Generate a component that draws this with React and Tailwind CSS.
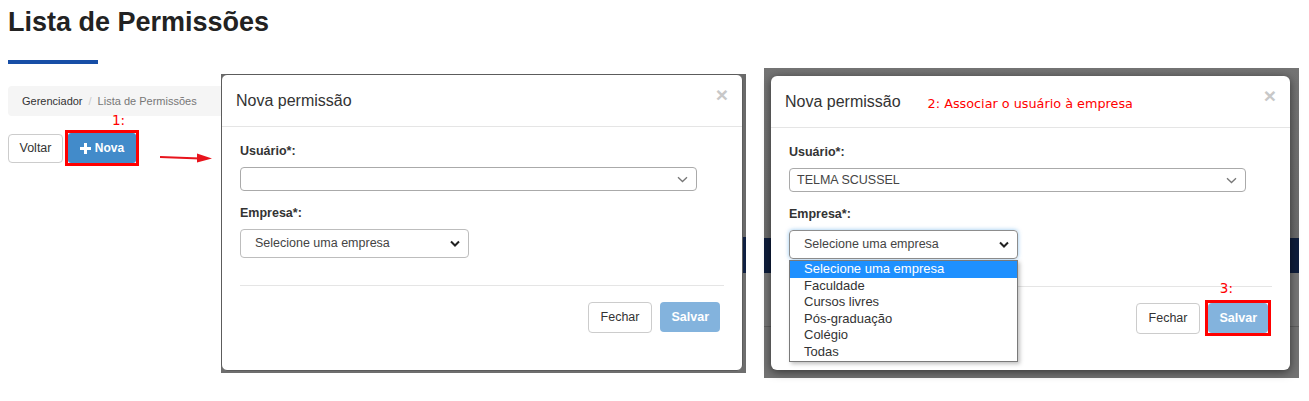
import React from 'react';

// select2-style thin arrow
function ThinChevron() {
  return (
    <svg width="11" height="7" viewBox="0 0 11 7" className="shrink-0">
      <path d="M1 1.2l4.5 4.3 4.5-4.3" fill="none" stroke="#777" strokeWidth="1.3" />
    </svg>
  );
}

// native select arrow
function BoldChevron() {
  return (
    <svg width="10" height="7" viewBox="0 0 10 7" className="shrink-0">
      <path d="M1 1.5l4 4 4-4" fill="none" stroke="#222" strokeWidth="2" />
    </svg>
  );
}

function PlusIcon() {
  return (
    <svg width="11" height="11" viewBox="0 0 11 11" className="shrink-0">
      <path d="M4 0h3v4h4v3H7v4H4V7H0V4h4z" fill="#fff" />
    </svg>
  );
}

const OPTIONS = ['Selecione uma empresa', 'Faculdade', 'Cursos livres', 'Pós-graduação', 'Colégio', 'Todas'];

function Modal({ step }) {
  const two = step === 2;
  return (
    <div
      className={`flex flex-col bg-white rounded-[6px] ${
        two ? 'w-[519px] h-[294px] shadow-[0_2px_10px_rgba(0,0,0,0.55)]' : 'w-[522px] h-[297px] border border-[#5c5c5c]'
      }`}
    >
      <div className="h-[51px] shrink-0 border-b border-[#e5e5e5] pl-[14px] pr-[14px] flex items-center box-content">
        <span className="text-[16px] text-[#333]">Nova permissão</span>
        {two && (
          <span className="ml-[27px] mt-[5px] text-[12.8px] text-[#f00] font-['DejaVu_Sans',sans-serif]">
            2: Associar o usuário à empresa
          </span>
        )}
        <span className="ml-auto self-start mt-[10px] h-[20px] leading-[20px] text-[21px] font-bold text-[#c8c8c8]">×</span>
      </div>

      <div className="px-[18px] pt-[15px] flex flex-col">
        <div className="text-[12.5px] leading-[18px] font-bold text-[#333]">Usuário*:</div>
        <div className="mt-[7px] w-[457px] h-[24px] border border-[#aaa] rounded-[4px] flex items-center justify-between pl-[7px] pr-[8px]">
          <span className="text-[12.5px] text-[#444]">{two ? 'TELMA SCUSSEL' : ''}</span>
          <ThinChevron />
        </div>

        <div className="mt-[13px] text-[12.5px] leading-[18px] font-bold text-[#333]">Empresa*:</div>
        <div className="relative mt-[7px] w-[229px]">
          <div
            className={`h-[29px] rounded-[4px] border flex items-center justify-between pl-[14px] pr-[8px] ${
              two ? 'border-[#8d8d8d] shadow-[0_0_4px_rgba(102,175,233,0.7)]' : 'border-[#bdbdbd]'
            }`}
          >
            <span className="text-[12.5px] text-[#444]">Selecione uma empresa</span>
            <BoldChevron />
          </div>
          {two && (
            <div className="absolute left-0 top-[30px] w-[229px] bg-white border border-[#7a7a7a] shadow-[2px_2px_4px_rgba(0,0,0,0.25)] z-10">
              {OPTIONS.map((o, i) => (
                <div
                  key={o}
                  className={`pl-[14px] text-[13px] leading-[16.6px] ${i === 0 ? 'bg-[#1e90ff] text-white' : 'text-[#333]'}`}
                >
                  {o}
                </div>
              ))}
            </div>
          )}
        </div>

        <div className="mt-[27px] h-px bg-[#e5e5e5]" />

        <div className="relative mt-[16px] pr-[4px] flex justify-end gap-[8px]">
          {two && (
            <span className="absolute right-[39px] -top-[22px] text-[13.5px] leading-[14px] text-[#f00] font-['DejaVu_Sans',sans-serif]">
              3:
            </span>
          )}
          <div className="h-[31px] px-[12px] flex items-center border border-[#ccc] rounded-[4px] text-[12.5px] text-[#333]">
            Fechar
          </div>
          <div className="relative h-[30px] px-[11px] flex items-center rounded-[4px] bg-[#83b3dd] text-[12.5px] font-bold text-white">
            Salvar
            {two && <div className="absolute -inset-[3px] border-[3px] border-[#f00]" />}
          </div>
        </div>
      </div>
    </div>
  );
}

export default function App() {
  return (
    <div className="w-[1309px] h-[401px] bg-white overflow-hidden font-['Liberation_Sans',Arial,sans-serif] text-[#333]">
      <h1 className="ml-[8px] mt-[6px] text-[27px] leading-[32px] font-bold text-[#222]">Lista de Permissões</h1>
      <div className="ml-[8px] mt-[22px] w-[90px] h-[4px] bg-[#174ea6]" />

      <div className="flex items-start">
        {/* page column */}
        <div className="relative ml-[8px] w-[213px] mt-[22px]">
          <div className="h-[30px] bg-[#f5f5f5] rounded-l-[4px] pl-[14px] flex items-center text-[11px]">
            <span className="text-[#333]">Gerenciador</span>
            <span className="px-[6px] text-[#ccc]">/</span>
            <span className="text-[#777]">Lista de Permissões</span>
          </div>

          <div className="mt-[14px] flex items-center gap-[2px]">
            <div className="w-[55px] h-[29px] flex items-center justify-center border border-[#ccc] rounded-[4px] text-[12.5px] text-[#333]">
              Voltar
            </div>
            <div className="relative border-[3px] border-[#f00]">
              <span className="absolute left-[44px] -top-[20px] text-[13.5px] leading-[14px] text-[#f00] font-['DejaVu_Sans',sans-serif]">
                1:
              </span>
              <div className="w-[68px] h-[30px] bg-[#428bca] rounded-[3px] flex items-center justify-center gap-[4px] text-white text-[12px] font-bold">
                <PlusIcon />
                Nova
              </div>
            </div>
          </div>

          <svg width="56" height="14" viewBox="0 0 56 14" className="absolute left-[151px] top-[65px]">
            <path d="M1 6l40 1.5" stroke="#e8141c" strokeWidth="2.2" fill="none" />
            <path d="M38 2.5L53 7.5 38 11.5z" fill="#e8141c" />
          </svg>
        </div>

        {/* first screenshot */}
        <div className="mt-[10px] pr-[3px] pb-[2px] bg-[linear-gradient(to_bottom,#6a6a6a_163px,#102042_163px,#102042_199px,#6e6e6e_199px)]">
          <Modal step={1} />
        </div>

        {/* second screenshot */}
        <div className="ml-[18px] mt-[4px] w-[535px] h-[310px] pl-[7px] pt-[8px] bg-[linear-gradient(to_bottom,#747474_0px,#6b6b6b_170px,#0e1d3b_170px,#0e1d3b_205px,#767676_205px,#767676_258px,#5f5f5f_258px,#5f5f5f_259px,#737373_259px)]">
          <Modal step={2} />
        </div>
      </div>
    </div>
  );
}
